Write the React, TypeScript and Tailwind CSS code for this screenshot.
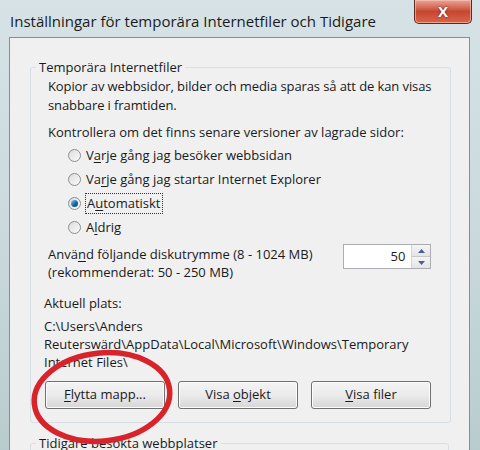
import React from "react";

const font = "font-['Open_Sans','Noto_Sans',sans-serif]";

function Key({ children }: { children: React.ReactNode }) {
  return <span className="underline underline-offset-2">{children}</span>;
}

function Radio({ checked }: { checked?: boolean }) {
  return (
    <span className="relative inline-flex w-[13px] h-[13px] shrink-0 rounded-full border border-[#8e8f8f] bg-gradient-to-br from-[#dcdcdc] to-[#fbfbfb] items-center justify-center">
      {checked && (
        <span className="w-[7px] h-[7px] rounded-full bg-gradient-to-br from-[#8ad0f5] via-[#1a6fb5] to-[#0c3d74]" />
      )}
    </span>
  );
}

function Btn({ children }: { children: React.ReactNode }) {
  return (
    <div className="w-[120px] h-[28px] rounded-[3px] border border-[#707070] bg-gradient-to-b from-[#f4f4f4] via-[#ebebeb] to-[#d6d6d6] flex items-center justify-center text-[13px] text-[#1a1a1a] shadow-[inset_0_0_0_1px_#fcfcfc]">
      <span>{children}</span>
    </div>
  );
}

export default function App() {
  return (
    <div
      className={`relative w-[480px] h-[450px] overflow-hidden flex flex-col bg-gradient-to-b from-[#d6e2e6] via-[#cbdadd] to-[#b9cccd] ${font}`}
    >
      {/* title bar */}
      <div className="h-[37px] shrink-0 flex items-start pl-[10px]">
        <span className="mt-[11px] text-[15px] leading-[20px] text-[#1b1b1b]">
          Inställningar för temporära Internetfiler och Tidigare
        </span>
        <div className="ml-auto mr-[8px] w-[58px] h-[24px] rounded-b-[5px] border border-t-0 border-[#5a2a24] bg-gradient-to-b from-[#e8a596] via-[#c8452e] to-[#d8664c] flex items-center justify-center shadow-[inset_0_0_0_1px_rgba(255,200,190,0.6)]">
          <span className="text-white text-[15px] font-bold leading-none [text-shadow:0_0_2px_#3a1010]">
            X
          </span>
        </div>
      </div>

      {/* client area */}
      <div className="flex-1 ml-[9px] mr-[10px] border border-[#7f9196] bg-[#f0f0f0] px-[20px] pt-[20px] flex flex-col gap-[11px] text-[13px] text-[#1a1a1a]">
        <fieldset className="border border-[#d5dfe5] rounded-[3px]">
          <legend className="ml-[5px] px-[3px] leading-[18px]">Temporära Internetfiler</legend>
          <div className="pl-[17px] pr-[19px] pb-[13px]">
            <p className="mt-[1px] leading-[19px] whitespace-nowrap tracking-[-0.1px]">
              Kopior av webbsidor, bilder och media sparas så att de kan visas
              <br />
              snabbare i framtiden.
            </p>
            <p className="mt-[8px] leading-[19px]">Kontrollera om det finns senare versioner av lagrade sidor:</p>
            <div className="mt-[4px] pl-[20px] flex flex-col gap-[5px]">
              <div className="flex items-center gap-[5px] h-[19px]">
                <Radio />
                <span>
                  V<Key>a</Key>rje gång jag besöker webbsidan
                </span>
              </div>
              <div className="flex items-center gap-[5px] h-[19px]">
                <Radio />
                <span>
                  Va<Key>r</Key>je gång jag startar Internet Explorer
                </span>
              </div>
              <div className="flex items-center gap-[5px] h-[19px]">
                <Radio checked />
                <span className="outline outline-1 outline-dotted outline-[#333] px-[1px]">
                  A<Key>u</Key>tomatiskt
                </span>
              </div>
              <div className="flex items-center gap-[5px] h-[19px]">
                <Radio />
                <span>
                  A<Key>l</Key>drig
                </span>
              </div>
            </div>
            <div className="mt-[8px] flex items-start justify-between">
              <p className="leading-[18px]">
                Anvä<Key>n</Key>d följande diskutrymme (8 - 1024 MB)
                <br />
                (rekommenderat: 50 - 250 MB)
              </p>
              <div className="mt-[-1px] flex h-[25px] w-[88px] border border-[#abadb3] bg-white">
                <div className="flex-1 flex items-center justify-end pr-[6px]">50</div>
                <div className="w-[19px] flex flex-col border-l border-[#d6d6d6]">
                  <div className="flex-1 flex items-center justify-center bg-gradient-to-b from-[#f5f5f5] to-[#e4e4e4] border-b border-[#c8c8c8]">
                    <svg width="7" height="4" viewBox="0 0 7 4">
                      <path d="M0 4 L3.5 0 L7 4 Z" fill="#4a5f9a" />
                    </svg>
                  </div>
                  <div className="flex-1 flex items-center justify-center bg-gradient-to-b from-[#f5f5f5] to-[#e4e4e4]">
                    <svg width="7" height="4" viewBox="0 0 7 4">
                      <path d="M0 0 L3.5 4 L7 0 Z" fill="#4a5f9a" />
                    </svg>
                  </div>
                </div>
              </div>
            </div>
            <p className="mt-[13px] -ml-[4px] leading-[18px]">Aktuell plats:</p>
            <p className="mt-[5px] -ml-[4px] leading-[18px]">
              C:\Users\Anders
              <br />
              Reuterswärd\AppData\Local\Microsoft\Windows\Temporary
              <br />
              Internet Files\
            </p>
            <div className="mt-[10px] -ml-[3px] flex gap-[13px]">
              <Btn>
                <Key>F</Key>lytta mapp...
              </Btn>
              <Btn>
                Visa <Key>o</Key>bjekt
              </Btn>
              <Btn>
                <Key>V</Key>isa filer
              </Btn>
            </div>
          </div>
        </fieldset>
        <fieldset className="border border-[#d5dfe5] rounded-[3px]">
          <legend className="ml-[5px] px-[3px] leading-[18px]">Tidigare besökta webbplatser</legend>
          <div className="h-[30px]" />
        </fieldset>
      </div>

      {/* annotation */}
      <svg className="absolute left-0 top-0 pointer-events-none" width="480" height="450">
        <ellipse
          cx="102"
          cy="397"
          rx="68"
          ry="44"
          transform="rotate(-6 102 397)"
          fill="none"
          stroke="#d8232a"
          strokeWidth="5.5"
        />
      </svg>
    </div>
  );
}
